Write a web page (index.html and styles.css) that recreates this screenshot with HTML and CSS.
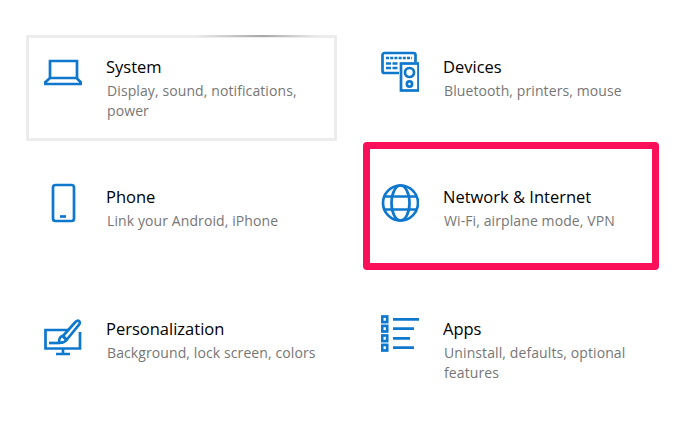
FILE: index.html
```html
<!DOCTYPE html>
<html lang="en">
<head>
<meta charset="utf-8">
<title>Windows Settings</title>
<link rel="stylesheet" href="styles.css">
</head>
<body>
<main class="grid">
  <a class="tile tile-focus">
    <svg class="icon" viewBox="0 0 38 45"><path d="M6 28V11h27v17"/><path d="M6 28h26.500l4.500 4.500v1.500H1v-1.500z"/></svg>
    <div class="text"><div class="title">System</div><div class="sub">Display, sound, notifications, power</div></div>
  </a>
  <a class="tile">
    <svg class="icon" viewBox="0 0 38 45"><path d="M18 23H3.500a2 2 0 0 1-2-2V5a2 2 0 0 1 2-2h29a2 2 0 0 1 2 2v7"/><path class="thin" d="M5 8h26" stroke-dasharray="3 1.200"/><path class="thin" d="M5 13.500h12M5 18h12" stroke-dasharray="5 1.500"/><rect x="20" y="13.500" width="17.500" height="27"/><circle cx="28.500" cy="22.500" r="4.500"/><circle cx="28.500" cy="34" r="2.600"/></svg>
    <div class="text"><div class="title">Devices</div><div class="sub">Bluetooth, printers, mouse</div></div>
  </a>
  <a class="tile">
    <svg class="icon" viewBox="0 0 38 45"><rect x="9" y="5" width="21" height="36" rx="2.500"/><path d="M16 36.500h6"/></svg>
    <div class="text"><div class="title">Phone</div><div class="sub">Link your Android, iPhone</div></div>
  </a>
  <a class="tile">
    <svg class="icon" viewBox="0 0 38 45"><circle cx="19.500" cy="23" r="17.500"/><ellipse cx="19.500" cy="23" rx="9" ry="17.500"/><path d="M4 16.500h31M4 29.500h31"/></svg>
    <div class="text"><div class="title">Network &amp; Internet</div><div class="sub">Wi-Fi, airplane mode, VPN</div></div>
    <span class="highlight"></span>
  </a>
  <a class="tile">
    <svg class="icon" viewBox="0 0 38 45"><path d="M25 18H1.500v18.500H36V20"/><path d="M19 37v5M12 42h14"/><path d="M5 31h11"/><path d="M19 24 30.500 11c1.700-2 3.500-2.800 4.700-1.800s.7 2.800-1 4.500L22.500 28z"/><path d="M18.500 24c-2.500.5-3.500 3-3.500 6.500 3 .5 6.500-.5 7.500-3z"/></svg>
    <div class="text"><div class="title">Personalization</div><div class="sub">Background, lock screen, colors</div></div>
  </a>
  <a class="tile">
    <svg class="icon" viewBox="0 0 38 45"><rect x="1.200" y="4.500" width="5" height="5.600"/><rect x="1.200" y="13.900" width="5" height="5.600"/><rect x="1.200" y="23.500" width="5" height="5.600"/><rect x="1.200" y="32.900" width="5" height="5.600"/><path d="M12 7.300h26M12 16.700h21M12 26.300h17M12 35.700h21"/></svg>
    <div class="text"><div class="title">Apps</div><div class="sub">Uninstall, defaults, optional features</div></div>
  </a>
</main>
</body>
</html>
```
FILE: styles.css
```css
html, body {
  margin: 0;
  background: #fff;
}
.grid {
  display: grid;
  grid-template-columns: 311px 296px;
  grid-template-rows: 106px 108px 105px;
  gap: 24px 26px;
  padding: 35px 0 0 26px;
  font-family: "Open Sans", "Noto Sans", sans-serif;
}
.tile {
  position: relative;
  display: flex;
  align-items: flex-start;
  gap: 24px;
  padding: 15px 0 0 18px;
}
.tile-focus {
  box-shadow: inset 0 0 0 3px #ececec;
}
.tile-focus::before {
  content: "";
  position: absolute;
  left: 170px;
  right: 20px;
  top: 0;
  height: 2px;
  background: linear-gradient(90deg, #ececec, #a8a8a8 55%, #ececec);
}
.icon {
  flex: none;
  width: 38px;
  height: 45px;
  fill: none;
  stroke: #0f78cd;
  stroke-width: 2.700;
}
.thin {
  stroke-width: 2.500;
}
.text {
  width: 212px;
  padding-top: 5px;
}
.title {
  font-size: 16.500px;
  line-height: 24px;
  color: #000;
}
.sub {
  margin-top: 2px;
  padding-left: 1px;
  font-size: 14px;
  letter-spacing: 0.100px;
  line-height: 20px;
  color: #767676;
}
.highlight {
  position: absolute;
  left: 0;
  right: 0;
  top: -23px;
  height: 128px;
  box-sizing: border-box;
  border: 7.500px solid #fa0f5a;
  border-radius: 4px;
}
```
